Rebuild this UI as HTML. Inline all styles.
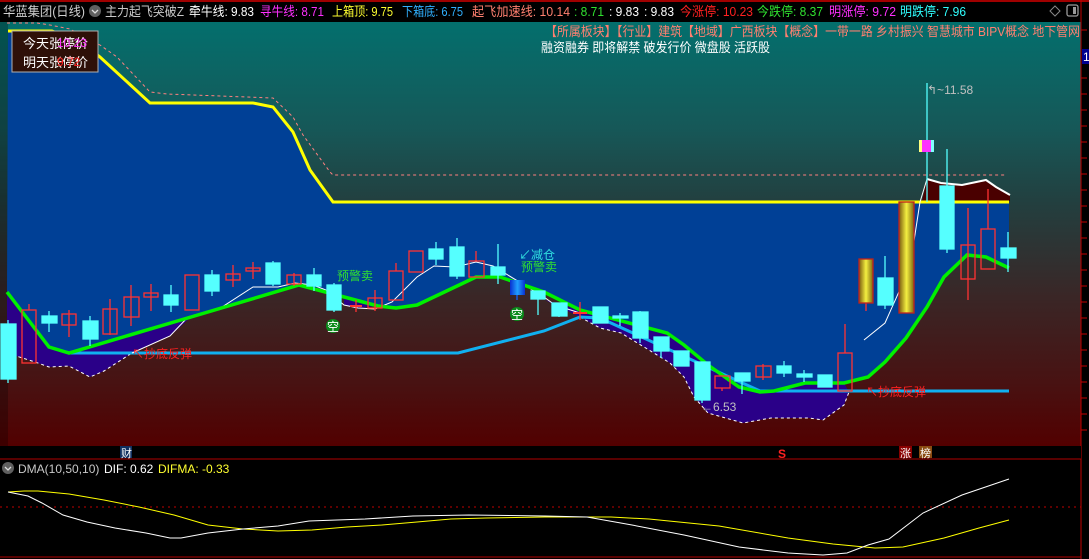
<!DOCTYPE html>
<html><head><meta charset="utf-8"><style>
html,body{margin:0;padding:0;background:#000;width:1089px;height:559px;overflow:hidden}
svg{display:block}
text{font-family:"Liberation Sans","Noto Sans CJK SC",sans-serif}
</style></head><body>
<svg width="1089" height="559" viewBox="0 0 1089 559" xmlns="http://www.w3.org/2000/svg">
<defs>
<linearGradient id="bg" x1="0" y1="22" x2="0" y2="446" gradientUnits="userSpaceOnUse">
<stop offset="0" stop-color="#036f6d"/><stop offset="0.25" stop-color="#165858"/>
<stop offset="0.42" stop-color="#224040"/><stop offset="0.65" stop-color="#3a2626"/>
<stop offset="0.85" stop-color="#481212"/><stop offset="1" stop-color="#520000"/>
</linearGradient>
<linearGradient id="gold" x1="0" y1="0" x2="1" y2="0">
<stop offset="0" stop-color="#7a5a10"/><stop offset="0.5" stop-color="#f4f040"/><stop offset="1" stop-color="#7a6410"/>
</linearGradient>
<linearGradient id="bl" x1="0" y1="0" x2="1" y2="0">
<stop offset="0" stop-color="#0830d0"/><stop offset="0.5" stop-color="#20a0ff"/><stop offset="1" stop-color="#0830d0"/>
</linearGradient>
</defs>
<rect x="0" y="22" width="1081" height="424" fill="url(#bg)"/>
<rect x="0" y="22" width="8" height="424" fill="#000" opacity="0.25"/>
<polygon fill="#004096" points="8,31 52,31 85,45 100,57 150,103 253,103 273,107 293,132 310,170 333,202 1009,202 1009,268 986,257 967,255 944,277 927,307 906,338 885,362 868,377 844,383 805,383 774,391 760,392 739,387 708,365 684,345 667,333 580,310 544,292 500,277 476,277 417,305 396,308 378,306 299,285 191,317 69,353 49,347 7,292"/>
<polygon fill="#2a0088" points="7,292 49,347 69,353 191,317 170,336 132,353 104,371 90,377 69,366 49,367 35,362 7,353"/>
<polygon fill="#2a0088" points="344,298 378,306 358,308 344,305"/>
<polygon fill="#2a0088" points="545,300 580,310 667,333 684,345 708,365 739,387 760,392 774,391 805,383 844,383 849,392 844,405 823,420 809,418 771,418 743,423 708,413 694,397 684,377 670,363 649,350 621,333 600,328 580,317"/>
<polyline fill="none" stroke="#fff" stroke-width="1" stroke-dasharray="3,3" points="7,353 35,362 49,367 69,366 90,377 104,371 132,353"/>
<polyline fill="none" stroke="#fff" stroke-width="1" stroke-dasharray="3,3" points="580,317 600,328 621,333 649,350 670,363 684,377 694,397 708,413 743,423 771,418 809,418 823,420 844,405 849,392"/>
<polygon fill="#4a0000" points="922,201 927,179 941,183 962,185 986,180 996,187 1010,195 1010,201"/>
<polyline fill="none" stroke="#fff" stroke-width="2" points="927,179 941,183 962,185 986,180 996,187 1010,195"/>
<polyline fill="none" stroke="#ff8080" stroke-width="1" stroke-dasharray="3,3" points="7,23 37,23 50,25 70,29 100,45 117,57 150,92 167,94 273,98 293,117 303,135 330,172 333,175 1005,175"/>
<polyline fill="none" stroke="#ffff00" stroke-width="3" points="8,31 52,31 85,45 100,57 150,103 253,103 273,107 293,132 310,170 333,202 1009,202"/>
<polyline fill="none" stroke="#10b0f0" stroke-width="3" points="69,353 458,353 544,331 580,317 600,318 760,391 1009,391"/>
<polyline fill="none" stroke="#fff" stroke-width="1" points="132,353 170,336 188,317 222,307 253,287 278,287 295,283 313,285 326,290 344,305 358,308 375,309 392,302 417,277 434,266 455,267 476,262 493,266 544,297 555,305 580,313"/>
<polyline fill="none" stroke="#fff" stroke-width="1" points="864,340 885,323 910,267 920,202 927,179"/>
<polyline fill="none" stroke="#00f000" stroke-width="3.5" points="7,292 49,347 69,353 191,317 299,285 378,306 396,308 417,305 476,277 500,277 544,292 580,310 667,333 684,345 708,365 739,387 760,392 774,391 805,383 844,383 868,377 885,362 906,338 927,307 944,277 967,255 986,257 1009,268"/>
<g stroke-width="1.3">
<g fill="#55ffff" stroke="#55ffff">
<line x1="8" y1="320" x2="8" y2="383"/><rect x="1" y="324" width="15" height="55"/>
<line x1="49" y1="311" x2="49" y2="332"/><rect x="42" y="316" width="15" height="7"/>
<line x1="90" y1="316" x2="90" y2="346"/><rect x="83" y="321" width="15" height="18"/>
<line x1="171" y1="285" x2="171" y2="312"/><rect x="164" y="295" width="14" height="10"/>
<line x1="212" y1="270" x2="212" y2="296"/><rect x="205" y="275" width="14" height="16"/>
<line x1="273" y1="261" x2="273" y2="286"/><rect x="266" y="263" width="14" height="21"/>
<line x1="314" y1="268" x2="314" y2="291"/><rect x="307" y="275" width="14" height="11"/>
<line x1="334" y1="283" x2="334" y2="312"/><rect x="327" y="285" width="14" height="25"/>
<line x1="436" y1="242" x2="436" y2="265"/><rect x="429" y="249" width="14" height="10"/>
<line x1="457" y1="238" x2="457" y2="279"/><rect x="450" y="247" width="14" height="29"/>
<line x1="498" y1="244" x2="498" y2="284"/><rect x="491" y="267" width="14" height="8"/>
<line x1="538" y1="291" x2="538" y2="315"/><rect x="531" y="291" width="14" height="8"/>
<line x1="559" y1="303" x2="559" y2="317"/><rect x="552" y="303" width="15" height="13"/>
<rect x="593" y="307" width="15" height="16"/>
<line x1="620" y1="313" x2="620" y2="326"/><rect x="613" y="316" width="15" height="2"/>
<line x1="640" y1="311" x2="640" y2="343"/><rect x="633" y="312" width="15" height="26"/>
<line x1="661" y1="337" x2="661" y2="358"/><rect x="654" y="337" width="15" height="14"/>
<rect x="674" y="351" width="15" height="15"/>
<line x1="702" y1="362" x2="702" y2="403"/><rect x="695" y="362" width="15" height="38"/>
<line x1="742" y1="373" x2="742" y2="394"/><rect x="735" y="373" width="15" height="8"/>
<line x1="784" y1="361" x2="784" y2="377"/><rect x="777" y="366" width="14" height="7"/>
<line x1="804" y1="370" x2="804" y2="382"/><rect x="797" y="374" width="15" height="3"/>
<rect x="818" y="375" width="14" height="12"/>
<line x1="885" y1="256" x2="885" y2="309"/><rect x="878" y="278" width="15" height="27"/>
<line x1="927" y1="83" x2="927" y2="202"/>
<line x1="947" y1="149" x2="947" y2="253"/><rect x="940" y="186" width="14" height="63"/>
<line x1="1008" y1="232" x2="1008" y2="272"/><rect x="1001" y="248" width="15" height="10"/>
</g>
<g fill="none" stroke="#ff3232">
<line x1="29" y1="304" x2="29" y2="310"/><rect x="22" y="310" width="14" height="53"/>
<line x1="69" y1="310" x2="69" y2="337"/><rect x="62" y="314" width="14" height="11"/>
<line x1="110" y1="299" x2="110" y2="335"/><rect x="103" y="309" width="14" height="25"/>
<line x1="131" y1="285" x2="131" y2="326"/><rect x="124" y="297" width="15" height="20"/>
<line x1="151" y1="284" x2="151" y2="311"/><rect x="144" y="293" width="14" height="4"/>
<rect x="185" y="275" width="14" height="35"/>
<line x1="233" y1="265" x2="233" y2="287"/><rect x="226" y="274" width="14" height="6"/>
<line x1="253" y1="262" x2="253" y2="279"/><rect x="246" y="268" width="14" height="3"/>
<line x1="294" y1="273" x2="294" y2="286"/><rect x="287" y="275" width="14" height="9"/>
<line x1="356" y1="300" x2="356" y2="312"/><line x1="350" y1="306" x2="362" y2="306" stroke-width="2"/>
<line x1="375" y1="290" x2="375" y2="311"/><rect x="368" y="298" width="14" height="10"/>
<line x1="396" y1="263" x2="396" y2="271"/><rect x="389" y="271" width="14" height="29"/>
<rect x="409" y="251" width="14" height="21"/>
<line x1="476" y1="251" x2="476" y2="261"/><rect x="469" y="261" width="15" height="16"/>
<line x1="580" y1="302" x2="580" y2="320"/><line x1="573" y1="313" x2="587" y2="313" stroke-width="2"/>
<line x1="722" y1="388" x2="722" y2="391"/><rect x="715" y="376" width="15" height="12"/>
<line x1="763" y1="364" x2="763" y2="380"/><rect x="756" y="366" width="15" height="11"/>
<line x1="845" y1="324" x2="845" y2="353"/><rect x="838" y="353" width="14" height="38"/>
<line x1="968" y1="208" x2="968" y2="300"/><rect x="961" y="245" width="14" height="34"/>
<line x1="988" y1="189" x2="988" y2="229"/><rect x="981" y="229" width="14" height="40"/>
</g>
<line x1="517" y1="280" x2="517" y2="300" stroke="#1060ff"/><rect x="510" y="280" width="15" height="15" fill="url(#bl)"/>
<line x1="866" y1="303" x2="866" y2="311" stroke="#ff3232"/><rect x="859" y="259" width="14" height="44" fill="url(#gold)" stroke="#c02020"/>
<rect x="899" y="202" width="15" height="111" fill="url(#gold)" stroke="#c02020"/>
<rect x="919" y="140" width="15" height="12" fill="#ff30ff"/><rect x="919" y="140" width="3" height="12" fill="#ffff80"/><rect x="931" y="140" width="3" height="12" fill="#80ffff"/>
</g>
<circle cx="333" cy="326" r="7" fill="#0a8a1a"/><text x="333" y="331" font-size="12" fill="#fff" text-anchor="middle">空</text>
<circle cx="517" cy="314" r="7" fill="#0a8a1a"/><text x="517" y="319" font-size="12" fill="#fff" text-anchor="middle">空</text>
<text x="337" y="280" font-size="12" fill="#30e030">预警卖</text>
<text x="519" y="259" font-size="12" fill="#30e0e0">↙减仓</text>
<text x="521" y="271" font-size="12" fill="#30e030">预警卖</text>
<text x="132" y="358" font-size="12" fill="#ff2020">↖抄底反弹</text>
<text x="866" y="396" font-size="12" fill="#ff2020">↖抄底反弹</text>
<text x="701" y="411" font-size="12" fill="#c0c0c0">←6.53</text>
<text x="927" y="94" font-size="12" fill="#c0c0c0">↰~11.58</text>
<rect x="12" y="31" width="86" height="41" fill="#2e1008" stroke="#b0b0b0"/>
<text x="23" y="48" font-size="13" fill="#fff">今天张停价</text>
<text x="57" y="47" font-size="12" fill="#ff30ff">10.23</text>
<text x="23" y="67" font-size="13" fill="#fff">明天张停价</text>
<text x="57" y="66" font-size="12" fill="#ff2020">9.72</text>
<text x="545" y="36" font-size="13" fill="#ff8070" textLength="535" lengthAdjust="spacingAndGlyphs">【所属板块】【行业】建筑【地域】广西板块【概念】一带一路 乡村振兴 智慧城市 BIPV概念 地下管网</text>
<rect x="1081" y="22" width="8" height="24" fill="#000"/>
<text x="541" y="52" font-size="13" fill="#fff" textLength="229" lengthAdjust="spacingAndGlyphs">融资融券 即将解禁 破发行价 微盘股 活跃股</text>
<rect x="0" y="0" width="1089" height="22" fill="#000"/>
<line x1="0" y1="1" x2="1089" y2="1" stroke="#a00000" stroke-width="2"/>
<g font-size="13" lengthAdjust="spacingAndGlyphs">
<text x="3" y="16" fill="#d0d0d0" textLength="82" lengthAdjust="spacingAndGlyphs">华蓝集团(日线)</text>
<text x="105" y="16" fill="#c8c8c8" textLength="79" lengthAdjust="spacingAndGlyphs">主力起飞突破Z</text>
<text x="189" y="16" fill="#fff" textLength="65" lengthAdjust="spacingAndGlyphs">牵牛线: 9.83</text>
<text x="260" y="16" fill="#ff30ff" textLength="64" lengthAdjust="spacingAndGlyphs">寻牛线: 8.71</text>
<text x="332" y="16" fill="#ffff30" textLength="61" lengthAdjust="spacingAndGlyphs">上箱顶: 9.75</text>
<text x="402" y="16" fill="#30b0ff" textLength="61" lengthAdjust="spacingAndGlyphs">下箱底: 6.75</text>
<text x="472" y="16" fill="#ff8070" textLength="98" lengthAdjust="spacingAndGlyphs">起飞加速线: 10.14</text>
<text x="574" y="16" fill="#30e030" textLength="30" lengthAdjust="spacingAndGlyphs">: 8.71</text>
<text x="609" y="16" fill="#fff" textLength="30" lengthAdjust="spacingAndGlyphs">: 9.83</text>
<text x="644" y="16" fill="#fff" textLength="30" lengthAdjust="spacingAndGlyphs">: 9.83</text>
<text x="680" y="16" fill="#ff2020" textLength="73" lengthAdjust="spacingAndGlyphs">今涨停: 10.23</text>
<text x="757" y="16" fill="#30e030" textLength="66" lengthAdjust="spacingAndGlyphs">今跌停: 8.37</text>
<text x="829" y="16" fill="#ff30ff" textLength="67" lengthAdjust="spacingAndGlyphs">明涨停: 9.72</text>
<text x="900" y="16" fill="#30ffff" textLength="66" lengthAdjust="spacingAndGlyphs">明跌停: 7.96</text>
</g>
<circle cx="95" cy="11" r="6" fill="#606060"/><path d="M92 10 L95 13 L98 10" stroke="#ddd" fill="none" stroke-width="1.3"/>
<path d="M1055 6 L1060 11 L1055 16 L1050 11 Z" fill="none" stroke="#888"/>
<rect x="1067" y="5" width="11" height="11" rx="2" fill="none" stroke="#999" stroke-width="1.3"/><rect x="1073" y="7" width="3" height="7" fill="#999"/>
<line x1="1081" y1="0" x2="1081" y2="559" stroke="#c00000"/>
<g stroke="#c00000">
<line x1="1081" y1="30" x2="1087" y2="30"/><line x1="1081" y1="78" x2="1087" y2="78"/><line x1="1081" y1="94" x2="1087" y2="94"/><line x1="1081" y1="110" x2="1087" y2="110"/><line x1="1081" y1="126" x2="1087" y2="126"/><line x1="1081" y1="142" x2="1087" y2="142"/><line x1="1081" y1="158" x2="1087" y2="158"/><line x1="1081" y1="174" x2="1087" y2="174"/><line x1="1081" y1="190" x2="1087" y2="190"/><line x1="1081" y1="206" x2="1087" y2="206"/><line x1="1081" y1="222" x2="1087" y2="222"/><line x1="1081" y1="238" x2="1087" y2="238"/><line x1="1081" y1="254" x2="1087" y2="254"/><line x1="1081" y1="270" x2="1087" y2="270"/><line x1="1081" y1="286" x2="1087" y2="286"/><line x1="1081" y1="302" x2="1087" y2="302"/><line x1="1081" y1="318" x2="1087" y2="318"/><line x1="1081" y1="334" x2="1087" y2="334"/><line x1="1081" y1="350" x2="1087" y2="350"/><line x1="1081" y1="366" x2="1087" y2="366"/><line x1="1081" y1="382" x2="1087" y2="382"/><line x1="1081" y1="398" x2="1087" y2="398"/><line x1="1081" y1="414" x2="1087" y2="414"/><line x1="1081" y1="430" x2="1087" y2="430"/>
</g>
<rect x="1082" y="49" width="7" height="15" fill="#000090"/><text x="1083" y="61" font-size="12" fill="#fff">1</text>
<rect x="0" y="446" width="1081" height="13" fill="#000"/>
<rect x="120" y="446" width="12" height="12" fill="#103060"/><text x="121" y="457" font-size="11" fill="#fff">财</text>
<text x="778" y="458" font-size="12" fill="#ff2020" font-weight="bold">S</text>
<rect x="899" y="446" width="13" height="12" fill="#8a0000"/><text x="900" y="457" font-size="11" fill="#fff">涨</text>
<rect x="919" y="446" width="13" height="12" fill="#8a4a10"/><text x="920" y="457" font-size="11" fill="#fff">榜</text>
<line x1="0" y1="459" x2="1081" y2="459" stroke="#b00000"/>
<line x1="0" y1="557" x2="1081" y2="557" stroke="#b00000"/>
<line x1="0" y1="507" x2="1081" y2="507" stroke="#c00000" stroke-dasharray="2,4"/>
<circle cx="8" cy="468" r="6" fill="#606060"/><path d="M5 467 L8 470 L11 467" stroke="#ddd" fill="none" stroke-width="1.3"/>
<text x="18" y="473" font-size="12" fill="#c8c8c8">DMA(10,50,10)</text>
<text x="104" y="473" font-size="12" fill="#fff">DIF: 0.62</text>
<text x="158" y="473" font-size="12" fill="#ffff30">DIFMA: -0.33</text>
<polyline fill="none" stroke="#ffff00" stroke-width="1" points="8,492 24,491 38,491 69,494 104,500 139,507 174,515 208,525 243,529 278,531 312,530 347,527 382,525 417,522 451,519 486,518 545,517 611,517 649,519 719,526 788,538 833,544 875,548 903,547 944,538 979,528 1009,520"/>
<polyline fill="none" stroke="#ffffff" stroke-width="1" points="8,492 28,496 42,503 63,515 87,522 115,528 146,533 170,538 181,538 208,533 243,529 278,526 309,521 365,519 413,516 469,515 545,516 587,517 632,525 684,535 739,547 788,553 823,555 847,553 868,545 889,539 923,513 962,495 1009,479"/>
</svg>
</body></html>
